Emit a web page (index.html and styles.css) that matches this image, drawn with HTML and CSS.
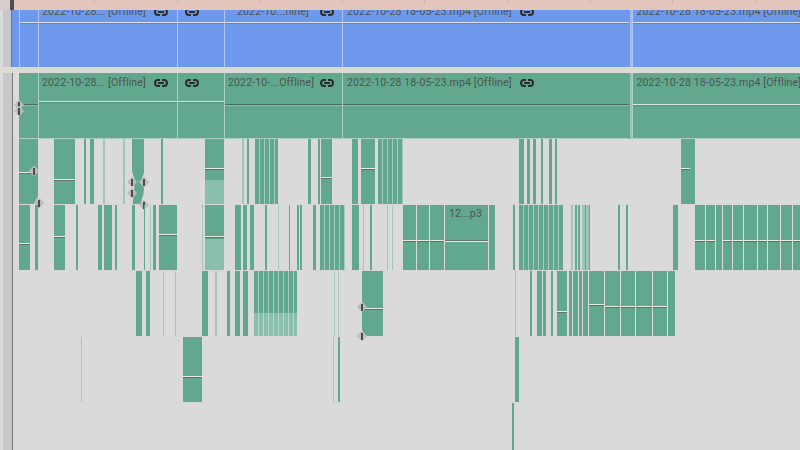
FILE: index.html
```html
<!DOCTYPE html>
<html lang="en">
<head>
<meta charset="utf-8">
<title>Timeline</title>
<link rel="stylesheet" href="styles.css">
</head>
<body>
<svg class="defs" width="0" height="0" aria-hidden="true"><symbol id="link" viewBox="0 0 14 8"><path d="M6 1H4a3 3 0 0 0 0 6h2M8 1h2a3 3 0 0 1 0 6H8M4 4h6" fill="none" stroke="#2b2e2c" stroke-width="2"/></symbol></svg>
<div class="app">
  <div class="ruler-row">
    <div class="ruler-rail"><span class="playhead"></span></div>
    <div class="ruler">
      <i></i><i></i><i></i><i></i><i></i><i></i><i></i><i></i><i></i>
    </div>
  </div>

  <div class="band blue">
    <div class="band-rail"></div>
    <div class="seg w19"><div class="head"></div></div>
    <div class="seg w139"><div class="head tight"><span class="label">2022-10-28... [Offline]</span><svg class="chain"><use href="#link"/></svg></div></div>
    <div class="seg w47"><div class="head end"><svg class="chain"><use href="#link"/></svg></div></div>
    <div class="seg w118"><div class="head inset wide"><span class="label">2022-10...fline]</span><svg class="chain"><use href="#link"/></svg></div></div>
    <div class="seg w287"><div class="head"><span class="label">2022-10-28 18-05-23.mp4 [Offline]</span><svg class="chain"><use href="#link"/></svg></div></div>
    <div class="seg last"><div class="head"><span class="label">2022-10-28 18-05-23.mp4 [Offline]</span></div></div>
  </div>

  <div class="divider"></div>

  <div class="band green">
    <div class="band-rail"></div>
    <div class="seg w19 bare"><div class="head tall dark-rule"></div></div>
    <div class="seg w139"><div class="head short tight"><span class="label">2022-10-28... [Offline]</span><svg class="chain"><use href="#link"/></svg></div></div>
    <div class="seg w47"><div class="head short end"><svg class="chain"><use href="#link"/></svg></div></div>
    <div class="seg w118"><div class="head tall tight snug dark-rule"><span class="label">2022-10-...Offline]</span><svg class="chain"><use href="#link"/></svg></div></div>
    <div class="seg w287"><div class="head tall dark-rule"><span class="label">2022-10-28 18-05-23.mp4 [Offline]</span><svg class="chain"><use href="#link"/></svg></div></div>
    <div class="seg last"><div class="head tall"><span class="label">2022-10-28 18-05-23.mp4 [Offline]</span></div></div>
    <span class="grip grip-a"></span>
    <span class="grip grip-b"></span>
  </div>

  <div class="lanes">
    <div class="lane-rail"></div>
    <div class="lane-stack">
      <div class="lane">
        <div class="clip cut-br" style="left:6px;width:19px"><b class="rule" style="top:33px;width:15px"></b></div>
        <div class="clip" style="left:41px;width:21px"><b class="rule" style="top:40px"></b></div>
        <div class="clip" style="left:71px;width:2px"></div>
        <div class="clip" style="left:77px;width:4px"></div>
        <div class="clip pale" style="left:90px;width:2px"></div>
        <div class="clip pale" style="left:110px;width:2px"></div>
        <div class="clip cut-mid" style="left:119px;width:12px"></div>
        <div class="clip" style="left:148px;width:2px"></div>
        <div class="clip fade" style="left:192px;width:19px"><b class="rule" style="top:29px"></b><u style="top:41px"></u></div>
        <div class="clip pale" style="left:229px;width:2px"></div>
        <div class="clip" style="left:234px;width:2px"></div>
        <div class="clip stripes" style="left:242px;width:23px"></div>
        <div class="clip" style="left:295px;width:3px"></div>
        <div class="clip" style="left:305px;width:2px"></div>
        <div class="clip" style="left:308px;width:11px"><b class="rule" style="top:38px"></b></div>
        <div class="clip" style="left:339px;width:6px"></div>
        <div class="clip" style="left:348px;width:14px"><b class="rule" style="top:29px"></b></div>
        <div class="clip stripes" style="left:365px;width:25px"></div>
        <div class="clip" style="left:506px;width:5px"></div>
        <div class="clip" style="left:514px;width:3px"></div>
        <div class="clip" style="left:520px;width:3px"></div>
        <div class="clip" style="left:528px;width:2px"></div>
        <div class="clip" style="left:536px;width:3px"></div>
        <div class="clip" style="left:542px;width:2px"></div>
        <div class="clip" style="left:668px;width:14px"><b class="rule" style="top:29px;width:9px"></b></div>
        <span class="grip" style="left:21px;top:32px"></span>
        <span class="grip" style="left:26px;top:64px"></span>
        <span class="grip" style="left:119px;top:43px"></span>
        <span class="grip" style="left:131px;top:43px"></span>
        <span class="grip" style="left:119px;top:54px"></span>
        <span class="grip" style="left:131px;top:66px"></span>
      </div>

      <div class="lane">
        <div class="clip" style="left:6px;width:11px"><b class="rule" style="top:38px"></b></div>
        <div class="clip" style="left:22px;width:3px"></div>
        <div class="clip" style="left:41px;width:11px"><b class="rule" style="top:31px"></b></div>
        <div class="clip" style="left:63px;width:2px"></div>
        <div class="clip" style="left:85px;width:4px"></div>
        <div class="clip" style="left:91px;width:8px"></div>
        <div class="clip" style="left:102px;width:2px"></div>
        <div class="clip" style="left:119px;width:3px"></div>
        <div class="clip" style="left:131px;width:1px"></div>
        <div class="clip pale" style="left:137px;width:1px"></div>
        <div class="clip" style="left:140px;width:3px"></div>
        <div class="clip" style="left:146px;width:18px"><b class="rule" style="top:29px"></b></div>
        <div class="clip pale" style="left:189px;width:1px"></div>
        <div class="clip fade" style="left:192px;width:19px"><b class="rule" style="top:31px"></b><u style="top:34px"></u></div>
        <div class="clip" style="left:222px;width:6px"></div>
        <div class="clip" style="left:230px;width:4px"></div>
        <div class="clip" style="left:237px;width:4px"></div>
        <div class="clip" style="left:252px;width:2px"></div>
        <div class="clip pale" style="left:265px;width:1px"></div>
        <div class="clip" style="left:276px;width:1px"></div>
        <div class="clip" style="left:284px;width:2px"></div>
        <div class="clip" style="left:287px;width:2px"></div>
        <div class="clip" style="left:300px;width:3px"></div>
        <div class="clip stripes" style="left:307px;width:25px"></div>
        <div class="clip" style="left:339px;width:7px"></div>
        <div class="clip pale" style="left:350px;width:1px"></div>
        <div class="clip" style="left:357px;width:2px"></div>
        <div class="clip pale" style="left:374px;width:1px"></div>
        <div class="clip pale" style="left:379px;width:1px"></div>
        <div class="clip" style="left:390px;width:13px"><b class="rule" style="top:35px"></b></div>
        <div class="clip" style="left:404px;width:12px"><b class="rule" style="top:35px"></b></div>
        <div class="clip" style="left:417px;width:14px"><b class="rule" style="top:35px"></b></div>
        <div class="clip" style="left:432px;width:43px"><b class="rule light" style="top:35px"></b><span class="tag">12...p3</span></div>
        <div class="clip" style="left:476px;width:6px"></div>
        <div class="clip" style="left:500px;width:2px"></div>
        <div class="clip stripes" style="left:506px;width:44px"></div>
        <div class="clip pale" style="left:558px;width:2px"></div>
        <div class="clip" style="left:562px;width:2px"></div>
        <div class="clip" style="left:565px;width:2px"></div>
        <div class="clip pale stripes-pale" style="left:569px;width:8px"></div>
        <div class="clip" style="left:605px;width:2px"></div>
        <div class="clip" style="left:613px;width:2px"></div>
        <div class="clip" style="left:660px;width:5px"></div>
        <div class="clip" style="left:682px;width:10px"><b class="rule" style="top:35px"></b></div>
        <div class="clip" style="left:693px;width:9px"><b class="rule" style="top:35px"></b></div>
        <div class="clip" style="left:703px;width:6px"></div>
        <div class="clip" style="left:710px;width:9px"><b class="rule" style="top:35px"></b></div>
        <div class="clip" style="left:720px;width:10px"><b class="rule" style="top:35px"></b></div>
        <div class="clip" style="left:731px;width:13px"><b class="rule" style="top:35px"></b></div>
        <div class="clip" style="left:745px;width:9px"><b class="rule" style="top:35px"></b></div>
        <div class="clip" style="left:755px;width:12px"><b class="rule" style="top:35px"></b></div>
        <div class="clip" style="left:768px;width:11px"><b class="rule" style="top:35px"></b></div>
        <div class="clip" style="left:780px;width:7px"><b class="rule" style="top:35px"></b></div>
      </div>

      <div class="lane">
        <div class="clip" style="left:123px;width:6px"></div>
        <div class="clip" style="left:133px;width:4px"></div>
        <div class="clip pale" style="left:150px;width:1px"></div>
        <div class="clip pale" style="left:162px;width:1px"></div>
        <div class="clip" style="left:189px;width:6px"></div>
        <div class="clip pale" style="left:202px;width:2px"></div>
        <div class="clip" style="left:214px;width:3px"></div>
        <div class="clip" style="left:222px;width:5px"></div>
        <div class="clip" style="left:230px;width:5px"></div>
        <div class="clip stripes fade" style="left:241px;width:43px"><u style="top:42px"></u></div>
        <div class="clip pale" style="left:321px;width:1px"></div>
        <div class="clip pale" style="left:325px;width:1px"></div>
        <div class="clip cut-tl-bl" style="left:349px;width:21px"><b class="rule" style="top:37px"></b></div>
        <div class="clip pale" style="left:502px;width:1px"></div>
        <div class="clip" style="left:517px;width:2px"></div>
        <div class="clip" style="left:524px;width:5px"></div>
        <div class="clip" style="left:530px;width:3px"></div>
        <div class="clip" style="left:538px;width:2px"></div>
        <div class="clip" style="left:544px;width:10px"><b class="rule" style="top:40px"></b></div>
        <div class="clip" style="left:556px;width:3px"></div>
        <div class="clip" style="left:560px;width:5px"></div>
        <div class="clip" style="left:566px;width:3px"></div>
        <div class="clip" style="left:570px;width:5px"></div>
        <div class="clip" style="left:576px;width:15px"><b class="rule" style="top:33px"></b></div>
        <div class="clip" style="left:592px;width:15px"><b class="rule" style="top:35px"></b></div>
        <div class="clip" style="left:608px;width:14px"><b class="rule" style="top:35px"></b></div>
        <div class="clip" style="left:623px;width:16px"><b class="rule" style="top:35px"></b></div>
        <div class="clip" style="left:640px;width:14px"><b class="rule" style="top:35px"></b></div>
        <div class="clip" style="left:655px;width:7px"></div>
        <span class="grip" style="left:349px;top:36px"></span>
        <span class="grip" style="left:349px;top:65px"></span>
      </div>

      <div class="lane">
        <div class="clip pale" style="left:68px;width:1px"></div>
        <div class="clip" style="left:170px;width:19px"><b class="rule" style="top:39px"></b></div>
        <div class="clip pale" style="left:320px;width:1px"></div>
        <div class="clip" style="left:325px;width:2px"></div>
        <div class="clip" style="left:502px;width:4px"></div>
      </div>

      <div class="lane open">
        <div class="clip" style="left:499px;width:2px"></div>
      </div>
    </div>
  </div>
</div>
</body>
</html>
```
FILE: styles.css
```css
* { box-sizing: border-box; }
html, body { margin: 0; padding: 0; }
body { width: 800px; height: 450px; overflow: hidden; background: #dadadb; font-family: "Roboto", "Liberation Sans", sans-serif; }
.defs { position: absolute; }
.app { width: 800px; height: 450px; display: flex; flex-direction: column; overflow: hidden; }

.ruler-row { display: flex; height: 10px; flex: none; }
.ruler-rail { width: 14px; background: #d6cfcb; display: flex; justify-content: flex-end; }
.playhead { width: 4px; background: #4f4f50; }
.ruler { flex: 1; background: #e3c5bb; display: flex; padding-left: 80px; gap: 81.6px; }
.ruler i { width: 1px; height: 3px; background: #cfb0a4; }

.band { position: relative; display: flex; flex: none; }
.band-rail { flex: none; }
.blue { height: 57px; background: #6e98eb; }
.blue .band-rail { width: 19px; background: linear-gradient(90deg, #dbdbdb 0 3px, #c8c8c8 3px 11px, #5878b8 11px 12px, #6e98eb 12px); }
.divider { height: 6px; flex: none; background: #dcdad5; }
.green { height: 66px; background: #62a88f; }
.green .band-rail { width: 19px; background: linear-gradient(90deg, #dbdbdb 0 3px, #c8c8c8 3px 12px, #77797a 12px 13px, #dcdcdc 13px); }
.green .seg { box-shadow: inset 0 -1px 0 #a9cdbf; }
.green .seg.last { box-shadow: inset 0 -1px 0 #a9cdbf, -2px 0 0 rgba(255, 255, 255, .35); }

.seg { flex: none; display: flex; flex-direction: column; border-left: 1px solid rgba(255, 255, 255, .45); }
.seg.bare { border-left: 0; }
.w19 { width: 19px; }
.w139 { width: 139px; }
.w47 { width: 47px; }
.w118 { width: 118px; }
.w287 { width: 287px; }
.last { flex: 1; margin-left: 2.5px; box-shadow: -2px 0 0 rgba(255, 255, 255, .35); }

.head { height: 13px; flex: none; display: flex; align-items: flex-end; gap: 8.5px; padding: 0 0 3px 4px; overflow: hidden; border-bottom: 1px solid rgba(255, 255, 255, .75); box-shadow: 0 1px 0 rgba(40, 60, 90, .22); white-space: nowrap; }
.head.tight { padding-left: 3px; }
.head.end { padding-left: 7px; }
.head.inset { padding-left: 12px; }
.head.wide { gap: 11.5px; }
.head.snug { gap: 6px; }
.head.short { height: 29px; padding-bottom: 11px; }
.head.tall { height: 32px; padding-bottom: 14px; }
.head.dark-rule { border-bottom: 1px solid #47695c; box-shadow: 0 1px 0 rgba(255, 255, 255, .25); }
.label { font-size: 10.5px; line-height: 14px; letter-spacing: .15px; color: #4a544f; }
.chain { width: 14px; height: 8px; flex: none; margin-bottom: 3px; }

.grip { position: absolute; width: 10px; height: 11px; margin: -5.5px 0 0 -5px; background: #bcbcbc; clip-path: polygon(50% 0, 100% 50%, 50% 100%, 0 50%); }
.grip::after { content: ""; position: absolute; left: 4px; top: 2px; width: 2px; height: 7px; background: #4c4c4c; }
.grip-a { left: 19px; top: 32px; }
.grip-b { left: 19px; top: 38px; }

.lanes { flex: 1; display: flex; min-height: 0; }
.lane-rail { width: 13px; flex: none; background: linear-gradient(90deg, #dbdbdb 0 3px, #c8c8c8 3px 12px, #77797a 12px 13px); }
.lane-stack { flex: 1; display: flex; flex-direction: column; }
.lane { position: relative; height: 66px; flex: none; border-bottom: 1px solid #d7d7d7; }
.lane.open { flex: 1; border-bottom: 0; }

.clip { position: absolute; top: 0; bottom: 0; background: #62a88f; }
.clip.pale { background: #a0c8b9; }
.clip.stripes { background: repeating-linear-gradient(90deg, #62a88f 0 4px, #a4cabb 4px 5px); }
.clip.stripes-pale { background: repeating-linear-gradient(90deg, #9cc6b6 0 3px, #62a88f 3px 4px); }
.clip.fade u { position: absolute; left: 0; right: 0; bottom: 0; background: rgba(220, 238, 230, .32); }
.cut-br { clip-path: polygon(0 0, 100% 0, 100% 88%, 78% 100%, 0 100%); }
.cut-mid { clip-path: polygon(0 0, 100% 0, 100% 52%, 75% 65%, 100% 76%, 95% 85%, 70% 100%, 5% 100%, 15% 85%, 20% 72%, 5% 67%, 25% 64%, 0 50%); }
.cut-tl-bl { clip-path: polygon(0 0, 100% 0, 100% 100%, 8% 100%, 0 90%, 0 62%, 12% 55%, 0 48%); }

.rule { position: absolute; left: 0; width: 100%; height: 2px; background: linear-gradient(#e9e9e2 0 1px, #66716c 1px); }
.rule.light { background: linear-gradient(#66716c 0 1px, #e9e9e2 1px); }
.tag { position: absolute; left: 4px; top: 2px; font-size: 10.5px; line-height: 14px; letter-spacing: .15px; color: #4a544f; }
```
